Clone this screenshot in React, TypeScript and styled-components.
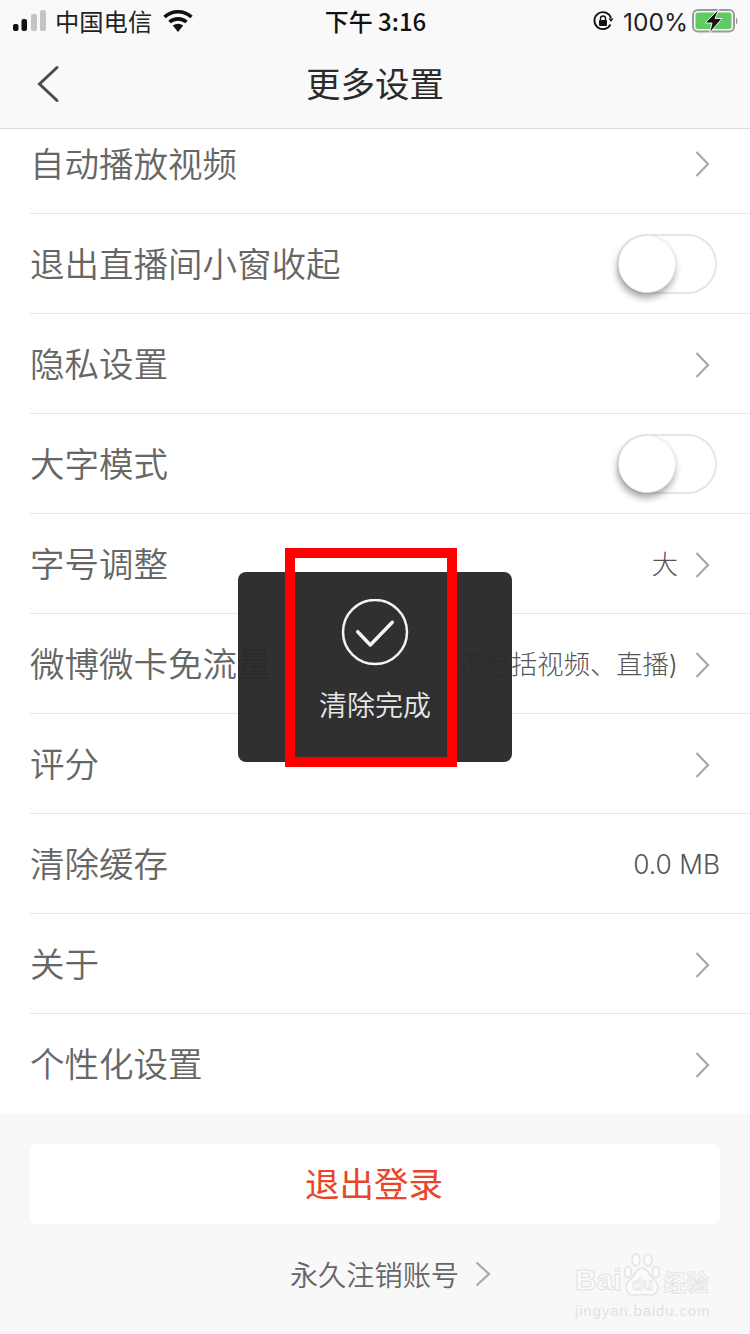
import React from "react";
import styled, { createGlobalStyle } from "styled-components";

const Global = createGlobalStyle`
  html, body { margin: 0; padding: 0; background: #f8f8f8; }
  body { font-family: "Noto Sans CJK SC", "Noto Sans", sans-serif; }
  * { box-sizing: border-box; }
`;

const Page = styled.div`
  position: relative;
  width: 750px;
  height: 1334px;
  overflow: hidden;
  background: #f8f8f8;
  display: flex;
  flex-direction: column;
`;

const Header = styled.header`
  height: 129px;
  flex: none;
  background: #f9f9f9;
  border-bottom: 1px solid #dedede;
  display: flex;
  flex-direction: column;
`;

const StatusBar = styled.div`
  height: 40px;
  padding: 0 12px 0 13px;
  display: grid;
  grid-template-columns: 1fr auto 1fr;
  align-items: center;
  color: #111;
`;

const StatusLeft = styled.div`
  display: flex;
  align-items: center;
  gap: 8px;
`;

const StatusRight = styled.div`
  display: flex;
  align-items: center;
  justify-content: flex-end;
`;

const Carrier = styled.span`
  font-size: 24.3px;
  font-weight: 400;
  line-height: 40px;
  margin-right: 3px;
  color: #222;
`;

const Clock = styled.span`
  font-family: "Noto Sans CJK SC", "Inter", sans-serif;
  font-size: 24px;
  font-weight: 500;
  line-height: 40px;
  color: #111;
`;

const Percent = styled.span`
  font-family: "Inter", "Liberation Sans", sans-serif;
  font-size: 24.5px;
  font-weight: 400;
  line-height: 40px;
  color: #222;
  margin: 2px 4px 0 9px;
`;

const NavBar = styled.div`
  position: relative;
  flex: 1;
  display: flex;
  align-items: center;
  justify-content: center;
  padding-bottom: 4px;
`;

const BackIcon = styled.svg`
  position: absolute;
  left: 36px;
  top: 25px;
  width: 24px;
  height: 38px;
`;

const Title = styled.h1`
  margin: 0;
  font-size: 34.5px;
  font-weight: 400;
  line-height: 48px;
  color: #2b2b2b;
`;

const List = styled.main`
  flex: none;
  background: #fff;
  display: flex;
  flex-direction: column;
`;

const Row = styled.div<{ $first?: boolean; $last?: boolean }>`
  height: ${(p) => (p.$first ? 85 : 100)}px;
  margin-left: 30px;
  padding-right: 30px;
  display: flex;
  align-items: center;
  justify-content: space-between;
  border-bottom: ${(p) => (p.$last ? "none" : "1px solid #e6e6e6")};
  padding-top: ${(p) => (p.$first ? 0 : 2)}px;
  padding-bottom: ${(p) => (p.$first ? 14 : 0)}px;
`;

const Label = styled.span<{ $first?: boolean }>`
  font-size: 34.5px;
  font-weight: 350;
  line-height: 48px;
  padding-bottom: ${(p) => (p.$first ? 4 : 6)}px;
  color: #666;
  white-space: nowrap;
`;

const RowEnd = styled.div`
  display: flex;
  align-items: center;
  gap: 16px;
`;

const Value = styled.span`
  font-family: "Inter", "Noto Sans CJK SC", sans-serif;
  font-size: 26.3px;
  font-weight: 300;
  line-height: 36px;
  color: #555;
  white-space: nowrap;
`;

const Chevron = styled.svg`
  width: 16px;
  height: 26px;
  flex: none;
  margin-right: 10px;
`;

const Switch = styled.div`
  position: relative;
  width: 100px;
  height: 60px;
  margin: 0 3px 2px 0;
  border-radius: 30px;
  border: 2px solid #e6e6e6;
  background: #fff;
`;

const Knob = styled.div`
  position: absolute;
  left: -1px;
  top: 0;
  width: 58px;
  height: 58px;
  margin-top: -1px;
  border-radius: 50%;
  background: #fff;
  border: 1px solid #e8e8e8;
  box-shadow: -1px 5px 7px rgba(0, 0, 0, 0.34);
`;

const Footer = styled.footer`
  flex: 1;
  display: flex;
  flex-direction: column;
  align-items: center;
  padding: 30px 30px 0;
`;

const LogoutButton = styled.div`
  width: 100%;
  height: 80px;
  padding: 0 2px 4px 0;
  border-radius: 8px;
  background: #fff;
  display: flex;
  align-items: center;
  justify-content: center;
  font-size: 34.5px;
  font-weight: 400;
  color: #e8452a;
`;

const CancelLink = styled.div`
  margin: 26px 0 0 32px;
  display: flex;
  align-items: center;
  gap: 15px;
  font-size: 28.2px;
  font-weight: 350;
  line-height: 48px;
  color: #666;
`;

const LinkChevron = styled.svg`
  width: 18px;
  height: 26px;
`;

const Toast = styled.div`
  position: absolute;
  left: 238px;
  top: 572px;
  width: 274px;
  height: 190px;
  border-radius: 8px;
  background: rgba(41, 41, 41, 0.97);
  display: flex;
  flex-direction: column;
  align-items: center;
  padding-top: 27px;
`;

const ToastIcon = styled.svg`
  width: 68px;
  height: 68px;
`;

const ToastText = styled.span`
  margin-top: 17px;
  font-size: 28px;
  font-weight: 350;
  line-height: 40px;
  color: #e8e8e8;
`;

const Highlight = styled.div`
  position: absolute;
  left: 285px;
  top: 548px;
  width: 172px;
  height: 219px;
  border: 10px solid #ff0000;
`;

const WhiteGap = styled.div`
  position: absolute;
  left: 0;
  top: 0;
  right: 0;
  height: 14px;
  background: #fff;
`;

const Watermark = styled.div`
  position: absolute;
  left: 575px;
  top: 1253px;
  width: 136px;
  display: flex;
  flex-direction: column;
  align-items: flex-start;
`;

const MarkTop = styled.div`
  display: flex;
  align-items: flex-end;
  height: 44px;
  font-family: "Liberation Sans", sans-serif;
  font-weight: 700;
  font-size: 30px;
  line-height: 34px;
  color: #fbfbfb;
  -webkit-text-stroke: 1px #e2e2e2;
`;

const Paw = styled.svg`
  width: 38px;
  height: 44px;
  margin: 0 3px 0 1px;
  flex: none;
`;

const MarkCn = styled.span`
  font-family: "Noto Sans CJK SC", sans-serif;
  font-size: 22.5px;
  font-weight: 700;
  line-height: 30px;
  padding-bottom: 1px;
  color: #fbfbfb;
  -webkit-text-stroke: 0.8px #e2e2e2;
`;

const MarkUrl = styled.span`
  margin-top: 5px;
  font-family: "Liberation Sans", sans-serif;
  font-size: 15px;
  line-height: 18px;
  letter-spacing: 0.85px;
  color: #e2e2e2;
`;

const PawText = styled.text`
  font-family: "Liberation Sans", sans-serif;
  font-size: 17px;
  font-weight: 700;
  fill: #fbfbfb;
  stroke: #e2e2e2;
  stroke-width: 0.8px;
`;

const Arrow = () => (
  <Chevron viewBox="0 0 16 26" fill="none">
    <path d="M2.5 1 L14 13 L2.5 25" stroke="#a8a8a8" strokeWidth="2.2" />
  </Chevron>
);

const SwitchOff = () => (
  <Switch>
    <Knob />
  </Switch>
);

export default function App() {
  return (
    <Page>
      <Global />
      <Header>
        <StatusBar>
          <StatusLeft>
            <svg width="34" height="22" viewBox="0 0 34 22">
              <rect x="0" y="14" width="5.5" height="7" rx="2" fill="#111" />
              <rect x="8.5" y="9" width="5.5" height="12" rx="2" fill="#111" />
              <rect x="18" y="4" width="6" height="17" rx="2" fill="#c4c4c4" />
              <rect x="27" y="0" width="6" height="21" rx="2" fill="#c4c4c4" />
            </svg>
            <Carrier>中国电信</Carrier>
            <svg width="30" height="24" viewBox="0 0 30 24">
              <path d="M1.5 8 A20 20 0 0 1 28.5 8" fill="none" stroke="#111" strokeWidth="3.6" />
              <path d="M6.5 13 A13 13 0 0 1 23.5 13" fill="none" stroke="#111" strokeWidth="3.6" />
              <path d="M9.8 16.6 A8 8 0 0 1 20.2 16.6 L15 23 Z" fill="#111" />
            </svg>
          </StatusLeft>
          <Clock>下午 3:16</Clock>
          <StatusRight>
            <svg width="22" height="22" viewBox="0 0 22 22" fill="none">
              <path d="M18.5 14.5 A8.5 8.5 0 1 1 19 8" stroke="#111" strokeWidth="1.8" />
              <path d="M16.5 8.5 L21.5 8.5 L19 12 Z" fill="#111" />
              <rect x="7" y="10" width="8" height="6" rx="1" fill="#111" />
              <path d="M8.5 10 V8.5 A2.5 2.5 0 0 1 13.5 8.5 V10" stroke="#111" strokeWidth="1.4" />
            </svg>
            <Percent>100%</Percent>
            <svg width="46" height="24" viewBox="0 0 46 24" fill="none">
              <rect x="1" y="1" width="41" height="21.5" rx="5" stroke="#9a9a9a" strokeWidth="2" />
              <rect x="3.5" y="3.5" width="36" height="16.5" rx="2.5" fill="#5fcb62" />
              <path d="M44 8.5 C46 9.5 46 14.5 44 15.5 Z" fill="#9a9a9a" />
              <path d="M27 0 L13 14 L20 14 L17.5 24 L30 9.5 L23 9.5 Z" fill="#111" stroke="#f4f4f4" strokeWidth="1" />
            </svg>
          </StatusRight>
        </StatusBar>
        <NavBar>
          <BackIcon viewBox="0 0 24 38" fill="none">
            <path d="M21 2.5 L3.5 19 L21 35.5" stroke="#4d4d4d" strokeWidth="3" strokeLinecap="round" />
          </BackIcon>
          <Title>更多设置</Title>
        </NavBar>
      </Header>

      <List>
        <Row $first>
          <Label $first>自动播放视频</Label>
          <Arrow />
        </Row>
        <Row>
          <Label>退出直播间小窗收起</Label>
          <SwitchOff />
        </Row>
        <Row>
          <Label>隐私设置</Label>
          <Arrow />
        </Row>
        <Row>
          <Label>大字模式</Label>
          <SwitchOff />
        </Row>
        <Row>
          <Label>字号调整</Label>
          <RowEnd>
            <Value>大</Value>
            <Arrow />
          </RowEnd>
        </Row>
        <Row>
          <Label>微博微卡免流量</Label>
          <RowEnd>
            <Value>(不包括视频、直播)</Value>
            <Arrow />
          </RowEnd>
        </Row>
        <Row>
          <Label>评分</Label>
          <Arrow />
        </Row>
        <Row>
          <Label>清除缓存</Label>
          <Value>0.0 MB</Value>
        </Row>
        <Row>
          <Label>关于</Label>
          <Arrow />
        </Row>
        <Row $last>
          <Label>个性化设置</Label>
          <Arrow />
        </Row>
      </List>

      <Footer>
        <LogoutButton>退出登录</LogoutButton>
        <CancelLink>
          永久注销账号
          <LinkChevron viewBox="0 0 18 26" fill="none">
            <path d="M2.5 1.5 L15 13 L2.5 24.5" stroke="#a8a8a8" strokeWidth="2.2" />
          </LinkChevron>
        </CancelLink>
      </Footer>

      <Toast>
        <ToastIcon viewBox="0 0 68 68" fill="none">
          <circle cx="34" cy="33" r="32" stroke="#f4f4f4" strokeWidth="2.5" />
          <path d="M16.7 32.7 L29.3 46 L51.3 23.3" stroke="#f4f4f4" strokeWidth="3.5" strokeLinecap="round" strokeLinejoin="round" />
        </ToastIcon>
        <ToastText>清除完成</ToastText>
      </Toast>

      <Highlight>
        <WhiteGap />
      </Highlight>

      <Watermark>
        <MarkTop>
          Bai
          <Paw viewBox="0 0 38 44" fill="#fbfbfb" stroke="#e2e2e2" strokeWidth="1.4">
            <ellipse cx="5" cy="19" rx="3.5" ry="5.5" />
            <ellipse cx="13" cy="7" rx="4" ry="6" />
            <ellipse cx="25" cy="7" rx="4" ry="6" />
            <ellipse cx="33" cy="19" rx="3.5" ry="5.5" />
            <path d="M19 15 C13 15 12 23 6 28 C0 33 4 43 12 42 C16 41.5 22 41.5 26 42 C34 43 38 33 32 28 C26 23 25 15 19 15 Z" />
            <PawText x="9" y="37">du</PawText>
          </Paw>
          <MarkCn>经验</MarkCn>
        </MarkTop>
        <MarkUrl>jingyan.baidu.com</MarkUrl>
      </Watermark>
    </Page>
  );
}
